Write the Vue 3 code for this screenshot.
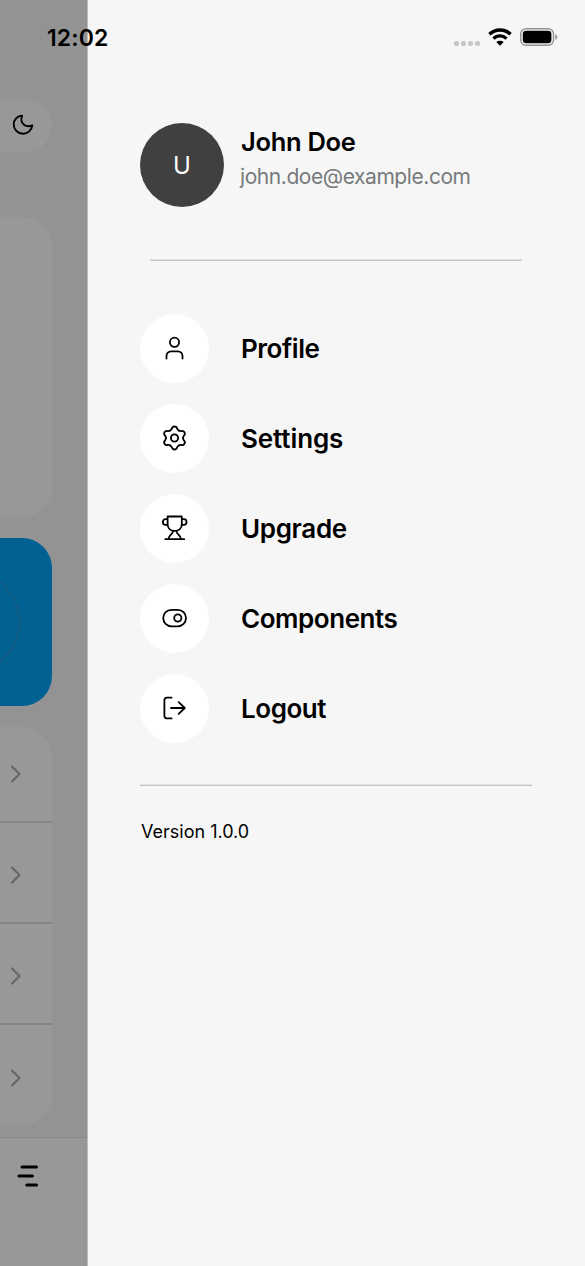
<script setup>
const items = [
  { id: 'profile', label: 'Profile' },
  { id: 'settings', label: 'Settings' },
  { id: 'upgrade', label: 'Upgrade' },
  { id: 'components', label: 'Components' },
  { id: 'logout', label: 'Logout' },
]
const lobes = [0, 60, 120, 180, 240, 300]
</script>

<template>
  <div class="screen">
    <div class="status">
      <span class="time">12:02</span>
      <div class="indicators">
        <span class="dots"><i v-for="n in 4" :key="n"></i></span>
        <svg class="wifi" width="24" height="18" viewBox="0 0 24 18">
          <path d="M1.4 6.2a15.3 15.3 0 0 1 21.2 0" fill="none" stroke="#000" stroke-width="3.4" />
          <path d="M5.5 10.6a9.3 9.3 0 0 1 13 0" fill="none" stroke="#000" stroke-width="3.2" />
          <path d="M12 17.8l-3.7-3.7a5.4 5.4 0 0 1 7.4 0z" />
        </svg>
        <svg class="battery" width="38" height="18" viewBox="0 0 38 18">
          <rect x=".7" y=".7" width="32.8" height="16.6" rx="5.3" fill="none" stroke="#929292" stroke-width="1.4" />
          <rect x="2.8" y="2.8" width="28.6" height="12.4" rx="3.4" />
          <path d="M35.3 6.2c2.7.9 2.7 4.7 0 5.6z" fill="#929292" />
        </svg>
      </div>
    </div>

    <aside class="backdrop">
      <div class="pill">
        <svg width="24" height="24" viewBox="0 0 24 24">
          <path d="M11.1 2.6C6.2 2.7 2.7 6.7 2.7 11.6c0 5 4.1 9.1 9.2 9.1 4.8 0 8.9-3.5 9.4-8.3-5.6 2.6-13.3-1.2-10.2-9.8z" />
        </svg>
      </div>
      <div class="card"></div>
      <div class="promo">
        <svg width="52" height="168" viewBox="0 0 52 168">
          <circle cx="-31" cy="84" r="50.4" />
        </svg>
      </div>
      <div class="list">
        <div v-for="n in 4" :key="n" class="row">
          <svg width="12" height="20" viewBox="0 0 12 20"><path d="M2 2.5 9.5 10 2 17.5" /></svg>
        </div>
      </div>
      <div class="tabbar">
        <svg width="24" height="26" viewBox="0 0 24 26"><path d="M6 4H20.5M3 13H16.5M10.800 22H20.5" /></svg>
      </div>
    </aside>

    <main class="drawer">
      <header class="user">
        <div class="avatar">U</div>
        <div class="who">
          <div class="name">John Doe</div>
          <div class="email">john.doe@example.com</div>
        </div>
      </header>
      <div class="rule inset"></div>
      <nav class="menu">
        <a v-for="item in items" :key="item.id" class="item">
          <span class="bubble">
            <svg width="29" height="29" viewBox="-0.3 -0.5 29 29">
              <template v-if="item.id === 'profile'">
                <circle cx="14.2" cy="7.8" r="4.6" />
                <path d="M6.2 24V21.4a4.6 4.6 0 0 1 4.6-4.6h6.8a4.6 4.6 0 0 1 4.6 4.6v2.6" />
              </template>
              <template v-else-if="item.id === 'settings'">
                <circle cx="14.2" cy="13.5" r="3.6" />
                <g transform="translate(14.2 13.5)">
                  <path
                    v-for="a in lobes"
                    :key="a"
                    :transform="`rotate(${a})`"
                    d="M-4.3-7.45C-3.4-8-2.9-8.3-2.6-9.4C-2-12.2 2-12.2 2.6-9.4C2.9-8.3 3.4-8 4.3-7.45"
                  />
                </g>
              </template>
              <template v-else-if="item.id === 'upgrade'">
                <path d="M7.3 2H21.5V9.5C21.5 13.6 18.5 16.4 14.4 16.4S7.3 13.6 7.3 9.5ZM7.3 4.6H5.2C1.7 4.6 1.7 10.3 5.2 10.3H7.3M21.5 4.6H23.6C27.1 4.6 27.1 10.3 23.6 10.3H21.5" />
                <path d="M12.7 16.5C12.7 20 8.5 20.3 8 24.6M16.1 16.5C16.1 20 20.3 20.3 20.8 24.6M5 24.7H23.9" />
              </template>
              <template v-else-if="item.id === 'components'">
                <rect x="2.9" y="5.3" width="22.8" height="16.5" rx="8.25" />
                <circle cx="17.5" cy="13.5" r="3.6" />
              </template>
              <template v-else>
                <path d="M11.3 3.1H6.8A2.5 2.5 0 0 0 4.1 5.6V21.4A2.5 2.5 0 0 0 6.8 23.9H11.3M10.7 13.5H24.3M18.4 7.7 24.5 13.5 18.4 19.3" />
              </template>
            </svg>
          </span>
          <span class="label" :class="item.id">{{ item.label }}</span>
        </a>
      </nav>
      <div class="rule"></div>
      <div class="version">Version 1.0.0</div>
    </main>
  </div>
</template>

<style>
body { margin: 0; }
</style>

<style scoped>
.screen {
  position: relative;
  display: flex;
  width: 585px;
  height: 1266px;
  overflow: hidden;
  background: #f6f6f6;
  color: #000;
  font-family: Inter, "Liberation Sans", sans-serif;
}
svg { display: block; }
.status {
  position: absolute;
  z-index: 2;
  top: 22px;
  left: 47px;
  right: 27px;
  height: 30px;
  display: flex;
  justify-content: space-between;
  align-items: center;
}
.time { font-size: 23px; font-weight: 600; line-height: 30px; margin-top: 1px; letter-spacing: 0.1px; }
.indicators { display: flex; align-items: center; }
.dots { display: flex; gap: 2px; margin: 12px 8px 0 0; }
.dots i { width: 5px; height: 5px; border-radius: 2px; background: #c7c7c7; }
.wifi { margin-right: 8px; }
.backdrop {
  box-sizing: border-box;
  width: 88px;
  flex: none;
  background: #939393;
  border-right: 1px solid #bbb;
  display: flex;
  flex-direction: column;
  align-items: flex-start;
  padding-top: 99px;
}
.pill {
  width: 52px;
  height: 53px;
  box-sizing: border-box;
  padding: 14px 0 0 11px;
  border-radius: 0 27px 27px 0;
  background: #989898;
}
.pill path { fill: none; stroke: #000; stroke-width: 1.9; stroke-linejoin: round; }
.card { width: 52px; height: 300px; margin-top: 65px; border-radius: 0 30px 30px 0; background: #989898; }
.promo {
  overflow: hidden;
  width: 52px;
  height: 168px;
  margin-top: 21px;
  border-radius: 0 30px 30px 0;
  background: #006192;
}
.promo circle { fill: none; stroke: #47484f; stroke-width: 1.2; stroke-dasharray: 1.3 2.7; }
.list { width: 52px; height: 398px; margin-top: 21px; border-radius: 0 30px 30px 0; background: #989898; }
.row {
  box-sizing: border-box;
  height: 101px;
  display: flex;
  align-items: center;
  padding: 4px 0 0 10px;
  border-bottom: 2px solid #818587;
}
.row:first-child { height: 96px; padding-top: 0; }
.row:last-child { border-bottom: 0; height: 100px; padding-top: 6px; }
.row path { fill: none; stroke: #666769; stroke-width: 2.2; stroke-linecap: round; stroke-linejoin: round; }
.tabbar {
  box-sizing: border-box;
  width: 100%;
  flex: 1;
  margin-top: 12px;
  padding: 25px 0 0 16px;
  border-top: 1px solid #898989;
  background: #989898;
}
.tabbar path { stroke: #000; stroke-width: 3; stroke-linecap: round; }
.drawer { flex: 1; padding: 123px 53px 0 52px; }
.user { display: flex; height: 84px; }
.avatar {
  width: 84px;
  height: 84px;
  border-radius: 50%;
  background: #404040;
  color: #fff;
  font-size: 24px;
  line-height: 85px;
  text-align: center;
}
.who { margin-left: 16px; padding-top: 3px; white-space: nowrap; }
.name { font-size: 25.5px; font-weight: 600; line-height: 32px; letter-spacing: -0.3px; margin-left: 1px; }
.email { font-size: 21px; line-height: 34px; margin-top: 2px; letter-spacing: -0.43px; color: #777a7b; }
.rule { height: 1px; background: #c4c4c4; border-top: 1px solid #e0e0e0; }
.inset { margin: 52px 10px 0; }
.menu { display: flex; flex-direction: column; gap: 21px; margin: 53px 0 41px; }
.item { display: flex; align-items: center; height: 69px; }
.bubble {
  width: 69px;
  height: 69px;
  flex: none;
  border-radius: 50%;
  background: #fff;
  display: flex;
  align-items: center;
  justify-content: center;
}
.bubble svg {
  fill: none;
  stroke: #000;
  stroke-width: 1.8;
  stroke-linecap: round;
  stroke-linejoin: round;
}
.label { margin-left: 32px; font-size: 26px; font-weight: 600; letter-spacing: -0.45px; line-height: 34px; }
.label.settings { letter-spacing: -0.1px; }
.label.upgrade { letter-spacing: -0.35px; }
.version { margin: 33px 0 0 1px; font-size: 18px; line-height: 26px; }
</style>
